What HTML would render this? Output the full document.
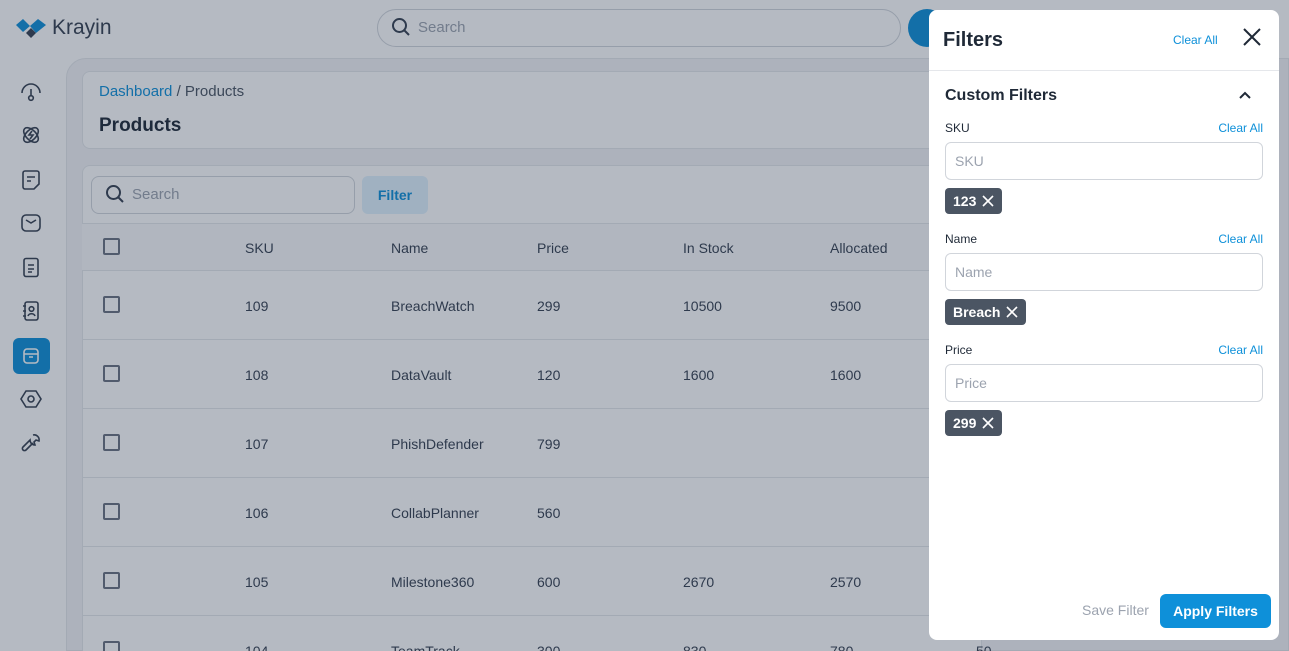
<!DOCTYPE html>
<html style="overflow:hidden;width:1289px;height:651px"><head><meta charset="utf-8"><style>
*{box-sizing:border-box;margin:0;padding:0}
body{width:1289px;height:651px;overflow:hidden;font-family:"Liberation Sans",sans-serif;background:#fff;position:relative;color:#374151}
.abs{position:absolute}
.ov{position:absolute;left:0;top:0;width:1289px;height:651px;background:rgba(30,45,70,0.33)}
.ic{position:absolute;left:20px;width:22px;height:22px}
.row{position:absolute;left:82px;width:900px;border-top:1px solid #e5e7eb;font-size:14px}
.row span{position:absolute}
.cb{position:absolute;left:21px;width:17px;height:17px;border:2px solid #6b7280;border-radius:2px}
.panel{position:absolute;left:929px;top:10px;width:350px;height:630px;background:#fff;border-radius:8px}
.lbl{position:absolute;left:16px;font-size:12px;color:#1f2937}
.ca{position:absolute;right:16px;font-size:12px;color:#0e90d9}
.inp{position:absolute;left:16px;width:318px;height:38px;border:1px solid #d1d5db;border-radius:6px;font-size:14px;color:#9ca3af;padding:10px 9px}
.tag{position:absolute;left:16px;height:26px;background:#4b5563;color:#fff;font-weight:bold;font-size:14px;border-radius:4px;padding:5px 8px;white-space:nowrap}
.tag svg{vertical-align:-1px;margin-left:6px}
</style></head><body>
<div class="abs" style="left:66px;top:58px;width:1223px;height:593px;background:#f3f4f6;border-radius:20px 0 0 0;border:1px solid #e5e7eb;overflow:hidden"></div>
<div class="abs" style="left:16px;top:17px">
<svg width="34" height="24" viewBox="0 0 34 24"><path d="M0 8 L7 2 L14 9 L7 15Z" fill="#0e90d9"/><path d="M14 9 L22 2 L30 8 L20 16Z" fill="#0e90d9"/><path d="M10 16 L15 11 L20 16 L15 21Z" fill="#374151"/></svg>
</div>
<div class="abs" style="left:52px;top:16px;font-size:21px;color:#374151">Krayin</div>
<div class="abs" style="left:377px;top:9px;width:524px;height:38px;border:1px solid #d1d5db;border-radius:19px;background:#fff"></div>
<svg class="abs" style="left:391px;top:17px" width="20" height="20" viewBox="0 0 20 20" fill="none" stroke="#374151" stroke-width="2"><circle cx="8.5" cy="8.5" r="6.5"/><path d="M13.5 13.5 L18 18"/></svg>
<div class="abs" style="left:418px;top:19px;font-size:15px;color:#9ca3af">Search</div>
<div class="abs" style="left:908px;top:9px;width:38px;height:38px;border-radius:50%;background:#0e90d9"></div>
<svg class="ic" style="top:80px" viewBox="0 0 22 22" fill="none" stroke="#374151" stroke-width="1.6"><path d="M2 13 A9 9 0 0 1 20 13"/><path d="M11 9v7"/><circle cx="11" cy="18" r="2.3"/></svg>
<svg class="ic" style="top:124px" viewBox="0 0 22 22" fill="none" stroke="#374151" stroke-width="1.6"><ellipse cx="11" cy="11" rx="9" ry="5" transform="rotate(45 11 11)"/><ellipse cx="11" cy="11" rx="9" ry="5" transform="rotate(-45 11 11)"/><path d="M12 7 L9 11 H13 L10 15"/></svg>
<svg class="ic" style="top:169px" viewBox="0 0 22 22" fill="none" stroke="#374151" stroke-width="1.6"><path d="M14 20H5a2 2 0 0 1-2-2V4a2 2 0 0 1 2-2h12a2 2 0 0 1 2 2v11z"/><path d="M7 8h8M7 12h4"/></svg>
<svg class="ic" style="top:212px" viewBox="0 0 22 22" fill="none" stroke="#374151" stroke-width="1.6"><rect x="2" y="3" width="18" height="16" rx="4"/><path d="M6 8 L11 11 L16 8"/></svg>
<svg class="ic" style="top:256px" viewBox="0 0 22 22" fill="none" stroke="#374151" stroke-width="1.6"><rect x="4" y="2.5" width="14" height="18" rx="2"/><path d="M8 9h6M8 13h6M8 16h4"/></svg>
<svg class="ic" style="top:300px" viewBox="0 0 22 22" fill="none" stroke="#374151" stroke-width="1.6"><rect x="5" y="2" width="13" height="18" rx="2"/><circle cx="11.5" cy="9" r="2.3"/><path d="M8 16c1-3 6-3 7 0M3 6h3M3 11h3M3 16h3"/></svg>
<div class="abs" style="left:13px;top:338px;width:37px;height:36px;border-radius:6px;background:#0e90d9"></div>
<svg class="ic" style="top:345px" viewBox="0 0 22 22" fill="none" stroke="#fff" stroke-width="1.6"><rect x="4" y="4" width="14" height="14" rx="3"/><path d="M4 9h14M9 12h4"/></svg>
<svg class="ic" style="top:388px" viewBox="0 0 22 22" fill="none" stroke="#374151" stroke-width="1.6"><path d="M6 3h10l5 8-5 8H6l-5-8z"/><circle cx="11" cy="11" r="3"/></svg>
<svg class="ic" style="top:432px" viewBox="0 0 22 22" fill="none" stroke="#374151" stroke-width="1.6"><path d="M13 3a5 5 0 0 1 6 6l-3-1-2 2 1 3a5 5 0 0 1-5-5L3 15a2 2 0 0 0 3 3l7-7"/></svg>
<div class="abs" style="left:82px;top:71px;width:900px;height:78px;background:#fff;border:1px solid #e5e7eb;border-radius:8px"></div>
<div class="abs" style="left:99px;top:83px;font-size:15px"><span style="color:#0e90d9">Dashboard</span> <span style="color:#4b5563">/ Products</span></div>
<div class="abs" style="left:99px;top:115px;font-size:19px;font-weight:bold;color:#1f2937">Products</div>
<div class="abs" style="left:82px;top:165px;width:900px;height:486px;background:#fff;border:1px solid #e5e7eb;border-radius:8px 8px 0 0;border-bottom:none"></div>
<div class="abs" style="left:91px;top:176px;width:264px;height:38px;border:1px solid #d1d5db;border-radius:8px"></div>
<svg class="abs" style="left:105px;top:184px" width="20" height="20" viewBox="0 0 20 20" fill="none" stroke="#374151" stroke-width="2"><circle cx="8.5" cy="8.5" r="6.5"/><path d="M13.5 13.5 L18 18"/></svg>
<div class="abs" style="left:132px;top:186px;font-size:15px;color:#9ca3af">Search</div>
<div class="abs" style="left:362px;top:176px;width:66px;height:38px;border-radius:6px;background:#e0f2fe;color:#0e90d9;font-weight:bold;font-size:14px;text-align:center;line-height:38px">Filter</div>
<div style="position:absolute;left:0;top:0;width:1289px;height:651px;overflow:hidden">
<div class="row" style="top:223px;height:48px;background:#f9fafb"><div class="cb" style="top:14px"></div><span style="left:163px;top:16px">SKU</span><span style="left:309px;top:16px">Name</span><span style="left:455px;top:16px">Price</span><span style="left:601px;top:16px">In Stock</span><span style="left:748px;top:16px">Allocated</span></div>
<div class="row" style="top:270px;height:69px"><div class="cb" style="top:25px"></div><span style="left:163px;top:27px">109</span><span style="left:309px;top:27px">BreachWatch</span><span style="left:455px;top:27px">299</span><span style="left:601px;top:27px">10500</span><span style="left:748px;top:27px">9500</span></div>
<div class="row" style="top:339px;height:69px"><div class="cb" style="top:25px"></div><span style="left:163px;top:27px">108</span><span style="left:309px;top:27px">DataVault</span><span style="left:455px;top:27px">120</span><span style="left:601px;top:27px">1600</span><span style="left:748px;top:27px">1600</span></div>
<div class="row" style="top:408px;height:69px"><div class="cb" style="top:25px"></div><span style="left:163px;top:27px">107</span><span style="left:309px;top:27px">PhishDefender</span><span style="left:455px;top:27px">799</span></div>
<div class="row" style="top:477px;height:69px"><div class="cb" style="top:25px"></div><span style="left:163px;top:27px">106</span><span style="left:309px;top:27px">CollabPlanner</span><span style="left:455px;top:27px">560</span></div>
<div class="row" style="top:546px;height:69px"><div class="cb" style="top:25px"></div><span style="left:163px;top:27px">105</span><span style="left:309px;top:27px">Milestone360</span><span style="left:455px;top:27px">600</span><span style="left:601px;top:27px">2670</span><span style="left:748px;top:27px">2570</span></div>
<div class="row" style="top:615px;height:36px"><div class="cb" style="top:25px"></div><span style="left:163px;top:27px">104</span><span style="left:309px;top:27px">TeamTrack</span><span style="left:455px;top:27px">300</span><span style="left:601px;top:27px">830</span><span style="left:748px;top:27px">780</span><span style="left:894px;top:27px">50</span></div>
</div>
<div class="ov"></div>
<div class="panel">
<div class="abs" style="left:14px;top:19px;font-size:20px;font-weight:bold;color:#1f2937">Filters</div>
<div class="abs" style="left:244px;top:23px;font-size:12px;color:#0e90d9">Clear All</div>
<svg class="abs" style="left:313px;top:17px" width="20" height="20" viewBox="0 0 20 20" stroke="#1f2937" stroke-width="2"><path d="M2 2L18 18M18 2L2 18"/></svg>
<div class="abs" style="left:0;top:60px;width:350px;border-top:1px solid #e5e7eb"></div>
<div class="abs" style="left:16px;top:77px;font-size:16px;font-weight:bold;color:#1f2937">Custom Filters</div>
<svg class="abs" style="left:309px;top:80px" width="14" height="10" viewBox="0 0 14 10" fill="none" stroke="#1f2937" stroke-width="2"><path d="M2 8L7 3L12 8"/></svg>
<div class="lbl" style="top:111px">SKU</div><div class="ca" style="top:111px">Clear All</div>
<div class="inp" style="top:132px">SKU</div>
<div class="tag" style="top:178px">123<svg width="12" height="12" viewBox="0 0 12 12" stroke="#fff" stroke-width="1.6"><path d="M1 1L11 11M11 1L1 11"/></svg></div>
<div class="lbl" style="top:222px">Name</div><div class="ca" style="top:222px">Clear All</div>
<div class="inp" style="top:243px">Name</div>
<div class="tag" style="top:289px">Breach<svg width="12" height="12" viewBox="0 0 12 12" stroke="#fff" stroke-width="1.6"><path d="M1 1L11 11M11 1L1 11"/></svg></div>
<div class="lbl" style="top:333px">Price</div><div class="ca" style="top:333px">Clear All</div>
<div class="inp" style="top:354px">Price</div>
<div class="tag" style="top:400px">299<svg width="12" height="12" viewBox="0 0 12 12" stroke="#fff" stroke-width="1.6"><path d="M1 1L11 11M11 1L1 11"/></svg></div>
<div class="abs" style="left:153px;top:592px;font-size:14px;color:#9ca3af">Save Filter</div>
<div class="abs" style="left:231px;top:584px;width:111px;height:34px;border-radius:6px;background:#0e90d9;color:#fff;font-weight:bold;font-size:14px;text-align:center;line-height:34px">Apply Filters</div>
</div>
</body></html>
